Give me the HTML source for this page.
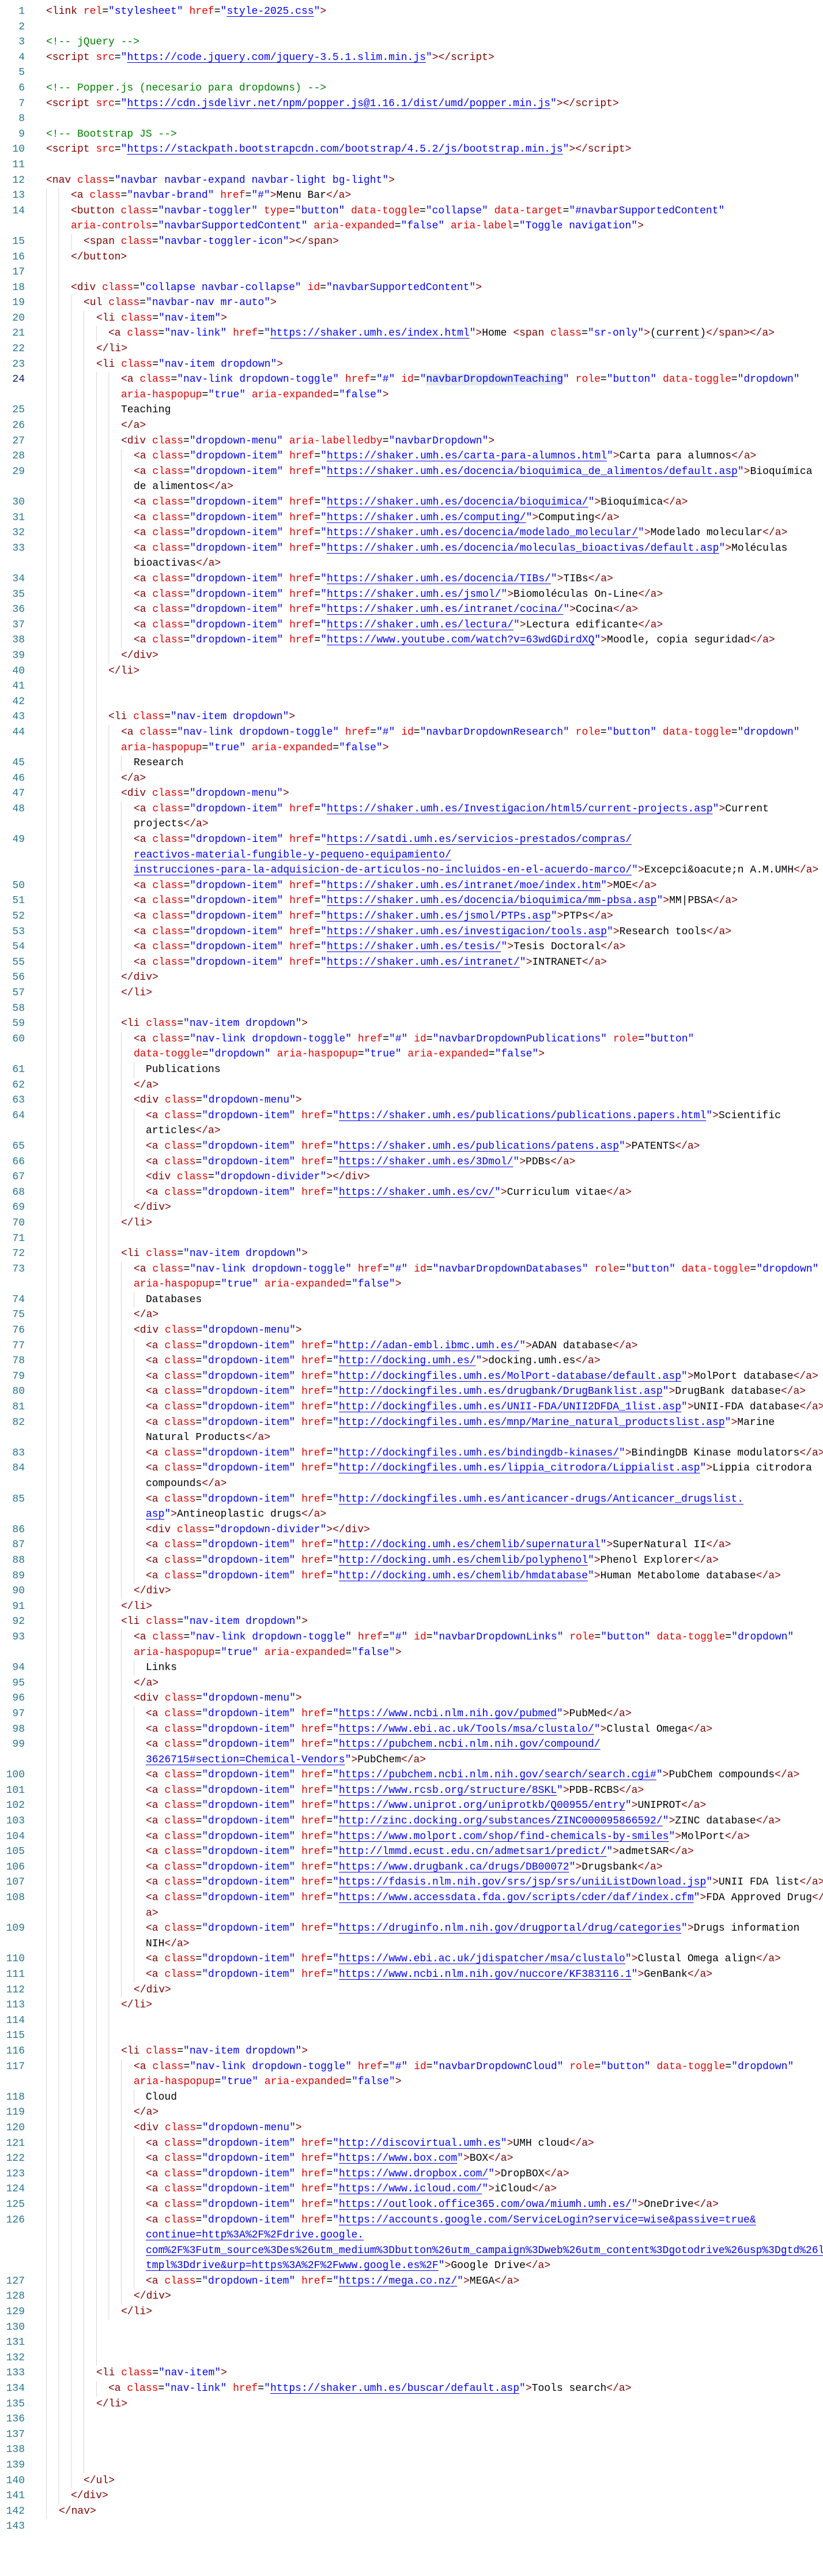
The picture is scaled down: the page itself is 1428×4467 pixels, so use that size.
<!DOCTYPE html>
<html><head><meta charset="utf-8">
<style>
html,body{margin:0;padding:0;background:#fff;}
body{width:1428px;height:4467px;overflow:hidden;padding-top:7px;box-sizing:border-box;font-family:"Liberation Mono","DejaVu Sans Mono",monospace;font-size:18px;color:#000;}
.r{position:relative;height:26.6px;line-height:26.6px;white-space:pre;overflow:hidden;
background-image:repeating-linear-gradient(to right,#d6d6d6 0 1px,transparent 1px 21.7px);
background-repeat:no-repeat;background-position:80px 0;background-size:calc(var(--g,0)*21.7px) 100%;}
.ln{position:absolute;left:0;width:43px;text-align:right;color:#237893;}
.ln.k{color:#0b216f;}
b{font-weight:normal;color:#800000}
s{text-decoration:none;color:#e50000}
q{quotes:none;color:#0000ff}
u{color:#0000ff;text-decoration:underline;text-underline-offset:4px;}
em{font-style:normal;color:#008000}
.hl{background:#e5ebf1}
.cu{text-decoration:underline;text-decoration-color:#aac0f0;text-underline-offset:4px}
</style></head><body>
<div class="r" style="padding-left:80px"><span class="ln">1</span><b>&lt;link</b> <s>rel</s>=<q>"stylesheet"</q> <s>href</s>=<q>"<u>style-2025.css</u>"</q><b>&gt;</b></div>
<div class="r"><span class="ln">2</span></div>
<div class="r" style="padding-left:80px"><span class="ln">3</span><em>&lt;!-- jQuery --&gt;</em></div>
<div class="r" style="padding-left:80px"><span class="ln">4</span><b>&lt;script</b> <s>src</s>=<q>"<u>https://code.jquery.com/jquery-3.5.1.slim.min.js</u>"</q><b>&gt;&lt;/script&gt;</b></div>
<div class="r"><span class="ln">5</span></div>
<div class="r" style="padding-left:80px"><span class="ln">6</span><em>&lt;!-- Popper.js (necesario para dropdowns) --&gt;</em></div>
<div class="r" style="padding-left:80px"><span class="ln">7</span><b>&lt;script</b> <s>src</s>=<q>"<u>https://cdn.jsdelivr.net/npm/popper.js@1.16.1/dist/umd/popper.min.js</u>"</q><b>&gt;&lt;/script&gt;</b></div>
<div class="r"><span class="ln">8</span></div>
<div class="r" style="padding-left:80px"><span class="ln">9</span><em>&lt;!-- Bootstrap JS --&gt;</em></div>
<div class="r" style="padding-left:80px"><span class="ln">10</span><b>&lt;script</b> <s>src</s>=<q>"<u>https://stackpath.bootstrapcdn.com/bootstrap/4.5.2/js/bootstrap.min.js</u>"</q><b>&gt;&lt;/script&gt;</b></div>
<div class="r"><span class="ln">11</span></div>
<div class="r" style="padding-left:80px"><span class="ln">12</span><b>&lt;nav</b> <s>class</s>=<q>"navbar navbar-expand navbar-light bg-light"</q><b>&gt;</b></div>
<div class="r" style="padding-left:123px;--g:2"><span class="ln">13</span><b>&lt;a</b> <s>class</s>=<q>"navbar-brand"</q> <s>href</s>=<q>"#"</q><b>&gt;</b>Menu Bar<b>&lt;/a&gt;</b></div>
<div class="r" style="padding-left:123px;--g:2"><span class="ln">14</span><b>&lt;button</b> <s>class</s>=<q>"navbar-toggler"</q> <s>type</s>=<q>"button"</q> <s>data-toggle</s>=<q>"collapse"</q> <s>data-target</s>=<q>"#navbarSupportedContent"</q></div>
<div class="r" style="padding-left:123px;--g:2"><s>aria-controls</s>=<q>"navbarSupportedContent"</q> <s>aria-expanded</s>=<q>"false"</q> <s>aria-label</s>=<q>"Toggle navigation"</q><b>&gt;</b></div>
<div class="r" style="padding-left:145px;--g:3"><span class="ln">15</span><b>&lt;span</b> <s>class</s>=<q>"navbar-toggler-icon"</q><b>&gt;&lt;/span&gt;</b></div>
<div class="r" style="padding-left:123px;--g:2"><span class="ln">16</span><b>&lt;/button&gt;</b></div>
<div class="r" style="--g:2"><span class="ln">17</span></div>
<div class="r" style="padding-left:123px;--g:2"><span class="ln">18</span><b>&lt;div</b> <s>class</s>=<q>"collapse navbar-collapse"</q> <s>id</s>=<q>"navbarSupportedContent"</q><b>&gt;</b></div>
<div class="r" style="padding-left:145px;--g:3"><span class="ln">19</span><b>&lt;ul</b> <s>class</s>=<q>"navbar-nav mr-auto"</q><b>&gt;</b></div>
<div class="r" style="padding-left:167px;--g:4"><span class="ln">20</span><b>&lt;li</b> <s>class</s>=<q>"nav-item"</q><b>&gt;</b></div>
<div class="r" style="padding-left:188px;--g:5"><span class="ln">21</span><b>&lt;a</b> <s>class</s>=<q>"nav-link"</q> <s>href</s>=<q>"<u>https://shaker.umh.es/index.html</u>"</q><b>&gt;</b>Home <b>&lt;span</b> <s>class</s>=<q>"sr-only"</q><b>&gt;</b><span class="cu">(current)</span><b>&lt;/span&gt;&lt;/a&gt;</b></div>
<div class="r" style="padding-left:167px;--g:4"><span class="ln">22</span><b>&lt;/li&gt;</b></div>
<div class="r" style="padding-left:167px;--g:4"><span class="ln">23</span><b>&lt;li</b> <s>class</s>=<q>"nav-item dropdown"</q><b>&gt;</b></div>
<div class="r" style="padding-left:210px;--g:6"><span class="ln k">24</span><b>&lt;a</b> <s>class</s>=<q>"nav-link dropdown-toggle"</q> <s>href</s>=<q>"#"</q> <s>id</s>=<q>"<span class="hl">navbarDropdownTeaching</span>"</q> <s>role</s>=<q>"button"</q> <s>data-toggle</s>=<q>"dropdown"</q></div>
<div class="r" style="padding-left:210px;--g:6"><s>aria-haspopup</s>=<q>"true"</q> <s>aria-expanded</s>=<q>"false"</q><b>&gt;</b></div>
<div class="r" style="padding-left:210px;--g:6"><span class="ln">25</span>Teaching</div>
<div class="r" style="padding-left:210px;--g:6"><span class="ln">26</span><b>&lt;/a&gt;</b></div>
<div class="r" style="padding-left:210px;--g:6"><span class="ln">27</span><b>&lt;div</b> <s>class</s>=<q>"dropdown-menu"</q> <s>aria-labelledby</s>=<q>"navbarDropdown"</q><b>&gt;</b></div>
<div class="r" style="padding-left:232px;--g:7"><span class="ln">28</span><b>&lt;a</b> <s>class</s>=<q>"dropdown-item"</q> <s>href</s>=<q>"<u>https://shaker.umh.es/carta-para-alumnos.html</u>"</q><b>&gt;</b>Carta para alumnos<b>&lt;/a&gt;</b></div>
<div class="r" style="padding-left:232px;--g:7"><span class="ln">29</span><b>&lt;a</b> <s>class</s>=<q>"dropdown-item"</q> <s>href</s>=<q>"<u>https://shaker.umh.es/docencia/bioquimica_de_alimentos/default.asp</u>"</q><b>&gt;</b>Bioquímica</div>
<div class="r" style="padding-left:232px;--g:7">de alimentos<b>&lt;/a&gt;</b></div>
<div class="r" style="padding-left:232px;--g:7"><span class="ln">30</span><b>&lt;a</b> <s>class</s>=<q>"dropdown-item"</q> <s>href</s>=<q>"<u>https://shaker.umh.es/docencia/bioquimica/</u>"</q><b>&gt;</b>Bioquímica<b>&lt;/a&gt;</b></div>
<div class="r" style="padding-left:232px;--g:7"><span class="ln">31</span><b>&lt;a</b> <s>class</s>=<q>"dropdown-item"</q> <s>href</s>=<q>"<u>https://shaker.umh.es/computing/</u>"</q><b>&gt;</b>Computing<b>&lt;/a&gt;</b></div>
<div class="r" style="padding-left:232px;--g:7"><span class="ln">32</span><b>&lt;a</b> <s>class</s>=<q>"dropdown-item"</q> <s>href</s>=<q>"<u>https://shaker.umh.es/docencia/modelado_molecular/</u>"</q><b>&gt;</b>Modelado molecular<b>&lt;/a&gt;</b></div>
<div class="r" style="padding-left:232px;--g:7"><span class="ln">33</span><b>&lt;a</b> <s>class</s>=<q>"dropdown-item"</q> <s>href</s>=<q>"<u>https://shaker.umh.es/docencia/moleculas_bioactivas/default.asp</u>"</q><b>&gt;</b>Moléculas</div>
<div class="r" style="padding-left:232px;--g:7">bioactivas<b>&lt;/a&gt;</b></div>
<div class="r" style="padding-left:232px;--g:7"><span class="ln">34</span><b>&lt;a</b> <s>class</s>=<q>"dropdown-item"</q> <s>href</s>=<q>"<u>https://shaker.umh.es/docencia/TIBs/</u>"</q><b>&gt;</b>TIBs<b>&lt;/a&gt;</b></div>
<div class="r" style="padding-left:232px;--g:7"><span class="ln">35</span><b>&lt;a</b> <s>class</s>=<q>"dropdown-item"</q> <s>href</s>=<q>"<u>https://shaker.umh.es/jsmol/</u>"</q><b>&gt;</b>Biomoléculas On-Line<b>&lt;/a&gt;</b></div>
<div class="r" style="padding-left:232px;--g:7"><span class="ln">36</span><b>&lt;a</b> <s>class</s>=<q>"dropdown-item"</q> <s>href</s>=<q>"<u>https://shaker.umh.es/intranet/cocina/</u>"</q><b>&gt;</b>Cocina<b>&lt;/a&gt;</b></div>
<div class="r" style="padding-left:232px;--g:7"><span class="ln">37</span><b>&lt;a</b> <s>class</s>=<q>"dropdown-item"</q> <s>href</s>=<q>"<u>https://shaker.umh.es/lectura/</u>"</q><b>&gt;</b>Lectura edificante<b>&lt;/a&gt;</b></div>
<div class="r" style="padding-left:232px;--g:7"><span class="ln">38</span><b>&lt;a</b> <s>class</s>=<q>"dropdown-item"</q> <s>href</s>=<q>"<u>https://www.youtube.com/watch?v=63wdGDirdXQ</u>"</q><b>&gt;</b>Moodle, copia seguridad<b>&lt;/a&gt;</b></div>
<div class="r" style="padding-left:210px;--g:6"><span class="ln">39</span><b>&lt;/div&gt;</b></div>
<div class="r" style="padding-left:188px;--g:5"><span class="ln">40</span><b>&lt;/li&gt;</b></div>
<div class="r" style="--g:5"><span class="ln">41</span></div>
<div class="r" style="--g:5"><span class="ln">42</span></div>
<div class="r" style="padding-left:188px;--g:5"><span class="ln">43</span><b>&lt;li</b> <s>class</s>=<q>"nav-item dropdown"</q><b>&gt;</b></div>
<div class="r" style="padding-left:210px;--g:6"><span class="ln">44</span><b>&lt;a</b> <s>class</s>=<q>"nav-link dropdown-toggle"</q> <s>href</s>=<q>"#"</q> <s>id</s>=<q>"navbarDropdownResearch"</q> <s>role</s>=<q>"button"</q> <s>data-toggle</s>=<q>"dropdown"</q></div>
<div class="r" style="padding-left:210px;--g:6"><s>aria-haspopup</s>=<q>"true"</q> <s>aria-expanded</s>=<q>"false"</q><b>&gt;</b></div>
<div class="r" style="padding-left:232px;--g:7"><span class="ln">45</span>Research</div>
<div class="r" style="padding-left:210px;--g:6"><span class="ln">46</span><b>&lt;/a&gt;</b></div>
<div class="r" style="padding-left:210px;--g:6"><span class="ln">47</span><b>&lt;div</b> <s>class</s>=<q>"dropdown-menu"</q><b>&gt;</b></div>
<div class="r" style="padding-left:232px;--g:7"><span class="ln">48</span><b>&lt;a</b> <s>class</s>=<q>"dropdown-item"</q> <s>href</s>=<q>"<u>https://shaker.umh.es/Investigacion/html5/current-projects.asp</u>"</q><b>&gt;</b>Current</div>
<div class="r" style="padding-left:232px;--g:7">projects<b>&lt;/a&gt;</b></div>
<div class="r" style="padding-left:232px;--g:7"><span class="ln">49</span><b>&lt;a</b> <s>class</s>=<q>"dropdown-item"</q> <s>href</s>=<q>"<u>https://satdi.umh.es/servicios-prestados/compras/</u></q></div>
<div class="r" style="padding-left:232px;--g:7"><q><u>reactivos-material-fungible-y-pequeno-equipamiento/</u></q></div>
<div class="r" style="padding-left:232px;--g:7"><q><u>instrucciones-para-la-adquisicion-de-articulos-no-incluidos-en-el-acuerdo-marco/</u>"</q><b>&gt;</b>Excepci&amp;oacute;n A.M.UMH<b>&lt;/a&gt;</b></div>
<div class="r" style="padding-left:232px;--g:7"><span class="ln">50</span><b>&lt;a</b> <s>class</s>=<q>"dropdown-item"</q> <s>href</s>=<q>"<u>https://shaker.umh.es/intranet/moe/index.htm</u>"</q><b>&gt;</b>MOE<b>&lt;/a&gt;</b></div>
<div class="r" style="padding-left:232px;--g:7"><span class="ln">51</span><b>&lt;a</b> <s>class</s>=<q>"dropdown-item"</q> <s>href</s>=<q>"<u>https://shaker.umh.es/docencia/bioquimica/mm-pbsa.asp</u>"</q><b>&gt;</b>MM|PBSA<b>&lt;/a&gt;</b></div>
<div class="r" style="padding-left:232px;--g:7"><span class="ln">52</span><b>&lt;a</b> <s>class</s>=<q>"dropdown-item"</q> <s>href</s>=<q>"<u>https://shaker.umh.es/jsmol/PTPs.asp</u>"</q><b>&gt;</b>PTPs<b>&lt;/a&gt;</b></div>
<div class="r" style="padding-left:232px;--g:7"><span class="ln">53</span><b>&lt;a</b> <s>class</s>=<q>"dropdown-item"</q> <s>href</s>=<q>"<u>https://shaker.umh.es/investigacion/tools.asp</u>"</q><b>&gt;</b>Research tools<b>&lt;/a&gt;</b></div>
<div class="r" style="padding-left:232px;--g:7"><span class="ln">54</span><b>&lt;a</b> <s>class</s>=<q>"dropdown-item"</q> <s>href</s>=<q>"<u>https://shaker.umh.es/tesis/</u>"</q><b>&gt;</b>Tesis Doctoral<b>&lt;/a&gt;</b></div>
<div class="r" style="padding-left:232px;--g:7"><span class="ln">55</span><b>&lt;a</b> <s>class</s>=<q>"dropdown-item"</q> <s>href</s>=<q>"<u>https://shaker.umh.es/intranet/</u>"</q><b>&gt;</b>INTRANET<b>&lt;/a&gt;</b></div>
<div class="r" style="padding-left:210px;--g:6"><span class="ln">56</span><b>&lt;/div&gt;</b></div>
<div class="r" style="padding-left:210px;--g:6"><span class="ln">57</span><b>&lt;/li&gt;</b></div>
<div class="r" style="--g:6"><span class="ln">58</span></div>
<div class="r" style="padding-left:210px;--g:6"><span class="ln">59</span><b>&lt;li</b> <s>class</s>=<q>"nav-item dropdown"</q><b>&gt;</b></div>
<div class="r" style="padding-left:232px;--g:7"><span class="ln">60</span><b>&lt;a</b> <s>class</s>=<q>"nav-link dropdown-toggle"</q> <s>href</s>=<q>"#"</q> <s>id</s>=<q>"navbarDropdownPublications"</q> <s>role</s>=<q>"button"</q></div>
<div class="r" style="padding-left:232px;--g:7"><s>data-toggle</s>=<q>"dropdown"</q> <s>aria-haspopup</s>=<q>"true"</q> <s>aria-expanded</s>=<q>"false"</q><b>&gt;</b></div>
<div class="r" style="padding-left:253px;--g:8"><span class="ln">61</span>Publications</div>
<div class="r" style="padding-left:232px;--g:7"><span class="ln">62</span><b>&lt;/a&gt;</b></div>
<div class="r" style="padding-left:232px;--g:7"><span class="ln">63</span><b>&lt;div</b> <s>class</s>=<q>"dropdown-menu"</q><b>&gt;</b></div>
<div class="r" style="padding-left:253px;--g:8"><span class="ln">64</span><b>&lt;a</b> <s>class</s>=<q>"dropdown-item"</q> <s>href</s>=<q>"<u>https://shaker.umh.es/publications/publications.papers.html</u>"</q><b>&gt;</b>Scientific</div>
<div class="r" style="padding-left:253px;--g:8">articles<b>&lt;/a&gt;</b></div>
<div class="r" style="padding-left:253px;--g:8"><span class="ln">65</span><b>&lt;a</b> <s>class</s>=<q>"dropdown-item"</q> <s>href</s>=<q>"<u>https://shaker.umh.es/publications/patens.asp</u>"</q><b>&gt;</b>PATENTS<b>&lt;/a&gt;</b></div>
<div class="r" style="padding-left:253px;--g:8"><span class="ln">66</span><b>&lt;a</b> <s>class</s>=<q>"dropdown-item"</q> <s>href</s>=<q>"<u>https://shaker.umh.es/3Dmol/</u>"</q><b>&gt;</b>PDBs<b>&lt;/a&gt;</b></div>
<div class="r" style="padding-left:253px;--g:8"><span class="ln">67</span><b>&lt;div</b> <s>class</s>=<q>"dropdown-divider"</q><b>&gt;&lt;/div&gt;</b></div>
<div class="r" style="padding-left:253px;--g:8"><span class="ln">68</span><b>&lt;a</b> <s>class</s>=<q>"dropdown-item"</q> <s>href</s>=<q>"<u>https://shaker.umh.es/cv/</u>"</q><b>&gt;</b>Curriculum vitae<b>&lt;/a&gt;</b></div>
<div class="r" style="padding-left:232px;--g:7"><span class="ln">69</span><b>&lt;/div&gt;</b></div>
<div class="r" style="padding-left:210px;--g:6"><span class="ln">70</span><b>&lt;/li&gt;</b></div>
<div class="r" style="--g:6"><span class="ln">71</span></div>
<div class="r" style="padding-left:210px;--g:6"><span class="ln">72</span><b>&lt;li</b> <s>class</s>=<q>"nav-item dropdown"</q><b>&gt;</b></div>
<div class="r" style="padding-left:232px;--g:7"><span class="ln">73</span><b>&lt;a</b> <s>class</s>=<q>"nav-link dropdown-toggle"</q> <s>href</s>=<q>"#"</q> <s>id</s>=<q>"navbarDropdownDatabases"</q> <s>role</s>=<q>"button"</q> <s>data-toggle</s>=<q>"dropdown"</q></div>
<div class="r" style="padding-left:232px;--g:7"><s>aria-haspopup</s>=<q>"true"</q> <s>aria-expanded</s>=<q>"false"</q><b>&gt;</b></div>
<div class="r" style="padding-left:253px;--g:8"><span class="ln">74</span>Databases</div>
<div class="r" style="padding-left:232px;--g:7"><span class="ln">75</span><b>&lt;/a&gt;</b></div>
<div class="r" style="padding-left:232px;--g:7"><span class="ln">76</span><b>&lt;div</b> <s>class</s>=<q>"dropdown-menu"</q><b>&gt;</b></div>
<div class="r" style="padding-left:253px;--g:8"><span class="ln">77</span><b>&lt;a</b> <s>class</s>=<q>"dropdown-item"</q> <s>href</s>=<q>"<u>http://adan-embl.ibmc.umh.es/</u>"</q><b>&gt;</b>ADAN database<b>&lt;/a&gt;</b></div>
<div class="r" style="padding-left:253px;--g:8"><span class="ln">78</span><b>&lt;a</b> <s>class</s>=<q>"dropdown-item"</q> <s>href</s>=<q>"<u>http://docking.umh.es/</u>"</q><b>&gt;</b>docking.umh.es<b>&lt;/a&gt;</b></div>
<div class="r" style="padding-left:253px;--g:8"><span class="ln">79</span><b>&lt;a</b> <s>class</s>=<q>"dropdown-item"</q> <s>href</s>=<q>"<u>http://dockingfiles.umh.es/MolPort-database/default.asp</u>"</q><b>&gt;</b>MolPort database<b>&lt;/a&gt;</b></div>
<div class="r" style="padding-left:253px;--g:8"><span class="ln">80</span><b>&lt;a</b> <s>class</s>=<q>"dropdown-item"</q> <s>href</s>=<q>"<u>http://dockingfiles.umh.es/drugbank/DrugBanklist.asp</u>"</q><b>&gt;</b>DrugBank database<b>&lt;/a&gt;</b></div>
<div class="r" style="padding-left:253px;--g:8"><span class="ln">81</span><b>&lt;a</b> <s>class</s>=<q>"dropdown-item"</q> <s>href</s>=<q>"<u>http://dockingfiles.umh.es/UNII-FDA/UNII2DFDA_1list.asp</u>"</q><b>&gt;</b>UNII-FDA database<b>&lt;/a&gt;</b></div>
<div class="r" style="padding-left:253px;--g:8"><span class="ln">82</span><b>&lt;a</b> <s>class</s>=<q>"dropdown-item"</q> <s>href</s>=<q>"<u>http://dockingfiles.umh.es/mnp/Marine_natural_productslist.asp</u>"</q><b>&gt;</b>Marine</div>
<div class="r" style="padding-left:253px;--g:8">Natural Products<b>&lt;/a&gt;</b></div>
<div class="r" style="padding-left:253px;--g:8"><span class="ln">83</span><b>&lt;a</b> <s>class</s>=<q>"dropdown-item"</q> <s>href</s>=<q>"<u>http://dockingfiles.umh.es/bindingdb-kinases/</u>"</q><b>&gt;</b>BindingDB Kinase modulators<b>&lt;/a&gt;</b></div>
<div class="r" style="padding-left:253px;--g:8"><span class="ln">84</span><b>&lt;a</b> <s>class</s>=<q>"dropdown-item"</q> <s>href</s>=<q>"<u>http://dockingfiles.umh.es/lippia_citrodora/Lippialist.asp</u>"</q><b>&gt;</b>Lippia citrodora</div>
<div class="r" style="padding-left:253px;--g:8">compounds<b>&lt;/a&gt;</b></div>
<div class="r" style="padding-left:253px;--g:8"><span class="ln">85</span><b>&lt;a</b> <s>class</s>=<q>"dropdown-item"</q> <s>href</s>=<q>"<u>http://dockingfiles.umh.es/anticancer-drugs/Anticancer_drugslist.</u></q></div>
<div class="r" style="padding-left:253px;--g:8"><q><u>asp</u>"</q><b>&gt;</b>Antineoplastic drugs<b>&lt;/a&gt;</b></div>
<div class="r" style="padding-left:253px;--g:8"><span class="ln">86</span><b>&lt;div</b> <s>class</s>=<q>"dropdown-divider"</q><b>&gt;&lt;/div&gt;</b></div>
<div class="r" style="padding-left:253px;--g:8"><span class="ln">87</span><b>&lt;a</b> <s>class</s>=<q>"dropdown-item"</q> <s>href</s>=<q>"<u>http://docking.umh.es/chemlib/supernatural</u>"</q><b>&gt;</b>SuperNatural II<b>&lt;/a&gt;</b></div>
<div class="r" style="padding-left:253px;--g:8"><span class="ln">88</span><b>&lt;a</b> <s>class</s>=<q>"dropdown-item"</q> <s>href</s>=<q>"<u>http://docking.umh.es/chemlib/polyphenol</u>"</q><b>&gt;</b>Phenol Explorer<b>&lt;/a&gt;</b></div>
<div class="r" style="padding-left:253px;--g:8"><span class="ln">89</span><b>&lt;a</b> <s>class</s>=<q>"dropdown-item"</q> <s>href</s>=<q>"<u>http://docking.umh.es/chemlib/hmdatabase</u>"</q><b>&gt;</b>Human Metabolome database<b>&lt;/a&gt;</b></div>
<div class="r" style="padding-left:232px;--g:7"><span class="ln">90</span><b>&lt;/div&gt;</b></div>
<div class="r" style="padding-left:210px;--g:6"><span class="ln">91</span><b>&lt;/li&gt;</b></div>
<div class="r" style="padding-left:210px;--g:6"><span class="ln">92</span><b>&lt;li</b> <s>class</s>=<q>"nav-item dropdown"</q><b>&gt;</b></div>
<div class="r" style="padding-left:232px;--g:7"><span class="ln">93</span><b>&lt;a</b> <s>class</s>=<q>"nav-link dropdown-toggle"</q> <s>href</s>=<q>"#"</q> <s>id</s>=<q>"navbarDropdownLinks"</q> <s>role</s>=<q>"button"</q> <s>data-toggle</s>=<q>"dropdown"</q></div>
<div class="r" style="padding-left:232px;--g:7"><s>aria-haspopup</s>=<q>"true"</q> <s>aria-expanded</s>=<q>"false"</q><b>&gt;</b></div>
<div class="r" style="padding-left:253px;--g:8"><span class="ln">94</span>Links</div>
<div class="r" style="padding-left:232px;--g:7"><span class="ln">95</span><b>&lt;/a&gt;</b></div>
<div class="r" style="padding-left:232px;--g:7"><span class="ln">96</span><b>&lt;div</b> <s>class</s>=<q>"dropdown-menu"</q><b>&gt;</b></div>
<div class="r" style="padding-left:253px;--g:8"><span class="ln">97</span><b>&lt;a</b> <s>class</s>=<q>"dropdown-item"</q> <s>href</s>=<q>"<u>https://www.ncbi.nlm.nih.gov/pubmed</u>"</q><b>&gt;</b>PubMed<b>&lt;/a&gt;</b></div>
<div class="r" style="padding-left:253px;--g:8"><span class="ln">98</span><b>&lt;a</b> <s>class</s>=<q>"dropdown-item"</q> <s>href</s>=<q>"<u>https://www.ebi.ac.uk/Tools/msa/clustalo/</u>"</q><b>&gt;</b>Clustal Omega<b>&lt;/a&gt;</b></div>
<div class="r" style="padding-left:253px;--g:8"><span class="ln">99</span><b>&lt;a</b> <s>class</s>=<q>"dropdown-item"</q> <s>href</s>=<q>"<u>https://pubchem.ncbi.nlm.nih.gov/compound/</u></q></div>
<div class="r" style="padding-left:253px;--g:8"><q><u>3626715#section=Chemical-Vendors</u>"</q><b>&gt;</b>PubChem<b>&lt;/a&gt;</b></div>
<div class="r" style="padding-left:253px;--g:8"><span class="ln">100</span><b>&lt;a</b> <s>class</s>=<q>"dropdown-item"</q> <s>href</s>=<q>"<u>https://pubchem.ncbi.nlm.nih.gov/search/search.cgi#</u>"</q><b>&gt;</b>PubChem compounds<b>&lt;/a&gt;</b></div>
<div class="r" style="padding-left:253px;--g:8"><span class="ln">101</span><b>&lt;a</b> <s>class</s>=<q>"dropdown-item"</q> <s>href</s>=<q>"<u>https://www.rcsb.org/structure/8SKL</u>"</q><b>&gt;</b>PDB-RCBS<b>&lt;/a&gt;</b></div>
<div class="r" style="padding-left:253px;--g:8"><span class="ln">102</span><b>&lt;a</b> <s>class</s>=<q>"dropdown-item"</q> <s>href</s>=<q>"<u>https://www.uniprot.org/uniprotkb/Q00955/entry</u>"</q><b>&gt;</b>UNIPROT<b>&lt;/a&gt;</b></div>
<div class="r" style="padding-left:253px;--g:8"><span class="ln">103</span><b>&lt;a</b> <s>class</s>=<q>"dropdown-item"</q> <s>href</s>=<q>"<u>http://zinc.docking.org/substances/ZINC000095866592/</u>"</q><b>&gt;</b>ZINC database<b>&lt;/a&gt;</b></div>
<div class="r" style="padding-left:253px;--g:8"><span class="ln">104</span><b>&lt;a</b> <s>class</s>=<q>"dropdown-item"</q> <s>href</s>=<q>"<u>https://www.molport.com/shop/find-chemicals-by-smiles</u>"</q><b>&gt;</b>MolPort<b>&lt;/a&gt;</b></div>
<div class="r" style="padding-left:253px;--g:8"><span class="ln">105</span><b>&lt;a</b> <s>class</s>=<q>"dropdown-item"</q> <s>href</s>=<q>"<u>http://lmmd.ecust.edu.cn/admetsar1/predict/</u>"</q><b>&gt;</b>admetSAR<b>&lt;/a&gt;</b></div>
<div class="r" style="padding-left:253px;--g:8"><span class="ln">106</span><b>&lt;a</b> <s>class</s>=<q>"dropdown-item"</q> <s>href</s>=<q>"<u>https://www.drugbank.ca/drugs/DB00072</u>"</q><b>&gt;</b>Drugsbank<b>&lt;/a&gt;</b></div>
<div class="r" style="padding-left:253px;--g:8"><span class="ln">107</span><b>&lt;a</b> <s>class</s>=<q>"dropdown-item"</q> <s>href</s>=<q>"<u>https://fdasis.nlm.nih.gov/srs/jsp/srs/uniiListDownload.jsp</u>"</q><b>&gt;</b>UNII FDA list<b>&lt;/a&gt;</b></div>
<div class="r" style="padding-left:253px;--g:8"><span class="ln">108</span><b>&lt;a</b> <s>class</s>=<q>"dropdown-item"</q> <s>href</s>=<q>"<u>https://www.accessdata.fda.gov/scripts/cder/daf/index.cfm</u>"</q><b>&gt;</b>FDA Approved Drug<b>&lt;/</b></div>
<div class="r" style="padding-left:253px;--g:8"><b>a&gt;</b></div>
<div class="r" style="padding-left:253px;--g:8"><span class="ln">109</span><b>&lt;a</b> <s>class</s>=<q>"dropdown-item"</q> <s>href</s>=<q>"<u>https://druginfo.nlm.nih.gov/drugportal/drug/categories</u>"</q><b>&gt;</b>Drugs information</div>
<div class="r" style="padding-left:253px;--g:8">NIH<b>&lt;/a&gt;</b></div>
<div class="r" style="padding-left:253px;--g:8"><span class="ln">110</span><b>&lt;a</b> <s>class</s>=<q>"dropdown-item"</q> <s>href</s>=<q>"<u>https://www.ebi.ac.uk/jdispatcher/msa/clustalo</u>"</q><b>&gt;</b>Clustal Omega align<b>&lt;/a&gt;</b></div>
<div class="r" style="padding-left:253px;--g:8"><span class="ln">111</span><b>&lt;a</b> <s>class</s>=<q>"dropdown-item"</q> <s>href</s>=<q>"<u>https://www.ncbi.nlm.nih.gov/nuccore/KF383116.1</u>"</q><b>&gt;</b>GenBank<b>&lt;/a&gt;</b></div>
<div class="r" style="padding-left:232px;--g:7"><span class="ln">112</span><b>&lt;/div&gt;</b></div>
<div class="r" style="padding-left:210px;--g:6"><span class="ln">113</span><b>&lt;/li&gt;</b></div>
<div class="r" style="--g:6"><span class="ln">114</span></div>
<div class="r" style="--g:6"><span class="ln">115</span></div>
<div class="r" style="padding-left:210px;--g:6"><span class="ln">116</span><b>&lt;li</b> <s>class</s>=<q>"nav-item dropdown"</q><b>&gt;</b></div>
<div class="r" style="padding-left:232px;--g:7"><span class="ln">117</span><b>&lt;a</b> <s>class</s>=<q>"nav-link dropdown-toggle"</q> <s>href</s>=<q>"#"</q> <s>id</s>=<q>"navbarDropdownCloud"</q> <s>role</s>=<q>"button"</q> <s>data-toggle</s>=<q>"dropdown"</q></div>
<div class="r" style="padding-left:232px;--g:7"><s>aria-haspopup</s>=<q>"true"</q> <s>aria-expanded</s>=<q>"false"</q><b>&gt;</b></div>
<div class="r" style="padding-left:253px;--g:8"><span class="ln">118</span>Cloud</div>
<div class="r" style="padding-left:232px;--g:7"><span class="ln">119</span><b>&lt;/a&gt;</b></div>
<div class="r" style="padding-left:232px;--g:7"><span class="ln">120</span><b>&lt;div</b> <s>class</s>=<q>"dropdown-menu"</q><b>&gt;</b></div>
<div class="r" style="padding-left:253px;--g:8"><span class="ln">121</span><b>&lt;a</b> <s>class</s>=<q>"dropdown-item"</q> <s>href</s>=<q>"<u>http://discovirtual.umh.es</u>"</q><b>&gt;</b>UMH cloud<b>&lt;/a&gt;</b></div>
<div class="r" style="padding-left:253px;--g:8"><span class="ln">122</span><b>&lt;a</b> <s>class</s>=<q>"dropdown-item"</q> <s>href</s>=<q>"<u>https://www.box.com</u>"</q><b>&gt;</b>BOX<b>&lt;/a&gt;</b></div>
<div class="r" style="padding-left:253px;--g:8"><span class="ln">123</span><b>&lt;a</b> <s>class</s>=<q>"dropdown-item"</q> <s>href</s>=<q>"<u>https://www.dropbox.com/</u>"</q><b>&gt;</b>DropBOX<b>&lt;/a&gt;</b></div>
<div class="r" style="padding-left:253px;--g:8"><span class="ln">124</span><b>&lt;a</b> <s>class</s>=<q>"dropdown-item"</q> <s>href</s>=<q>"<u>https://www.icloud.com/</u>"</q><b>&gt;</b>iCloud<b>&lt;/a&gt;</b></div>
<div class="r" style="padding-left:253px;--g:8"><span class="ln">125</span><b>&lt;a</b> <s>class</s>=<q>"dropdown-item"</q> <s>href</s>=<q>"<u>https://outlook.office365.com/owa/miumh.umh.es/</u>"</q><b>&gt;</b>OneDrive<b>&lt;/a&gt;</b></div>
<div class="r" style="padding-left:253px;--g:8"><span class="ln">126</span><b>&lt;a</b> <s>class</s>=<q>"dropdown-item"</q> <s>href</s>=<q>"<u>https://accounts.google.com/ServiceLogin?service=wise&amp;passive=true&amp;</u></q></div>
<div class="r" style="padding-left:253px;--g:8"><q><u>continue=http%3A%2F%2Fdrive.google.</u></q></div>
<div class="r" style="padding-left:253px;--g:8"><q><u>com%2F%3Futm_source%3Des%26utm_medium%3Dbutton%26utm_campaign%3Dweb%26utm_content%3Dgotodrive%26usp%3Dgtd%26l</u></q></div>
<div class="r" style="padding-left:253px;--g:8"><q><u>tmpl%3Ddrive&amp;urp=https%3A%2F%2Fwww.google.es%2F</u>"</q><b>&gt;</b>Google Drive<b>&lt;/a&gt;</b></div>
<div class="r" style="padding-left:253px;--g:8"><span class="ln">127</span><b>&lt;a</b> <s>class</s>=<q>"dropdown-item"</q> <s>href</s>=<q>"<u>https://mega.co.nz/</u>"</q><b>&gt;</b>MEGA<b>&lt;/a&gt;</b></div>
<div class="r" style="padding-left:232px;--g:7"><span class="ln">128</span><b>&lt;/div&gt;</b></div>
<div class="r" style="padding-left:210px;--g:6"><span class="ln">129</span><b>&lt;/li&gt;</b></div>
<div class="r" style="--g:5"><span class="ln">130</span></div>
<div class="r" style="--g:5"><span class="ln">131</span></div>
<div class="r" style="--g:5"><span class="ln">132</span></div>
<div class="r" style="padding-left:167px;--g:4"><span class="ln">133</span><b>&lt;li</b> <s>class</s>=<q>"nav-item"</q><b>&gt;</b></div>
<div class="r" style="padding-left:188px;--g:5"><span class="ln">134</span><b>&lt;a</b> <s>class</s>=<q>"nav-link"</q> <s>href</s>=<q>"<u>https://shaker.umh.es/buscar/default.asp</u>"</q><b>&gt;</b>Tools search<b>&lt;/a&gt;</b></div>
<div class="r" style="padding-left:167px;--g:4"><span class="ln">135</span><b>&lt;/li&gt;</b></div>
<div class="r" style="--g:4"><span class="ln">136</span></div>
<div class="r" style="--g:4"><span class="ln">137</span></div>
<div class="r" style="--g:4"><span class="ln">138</span></div>
<div class="r" style="--g:4"><span class="ln">139</span></div>
<div class="r" style="padding-left:145px;--g:3"><span class="ln">140</span><b>&lt;/ul&gt;</b></div>
<div class="r" style="padding-left:123px;--g:2"><span class="ln">141</span><b>&lt;/div&gt;</b></div>
<div class="r" style="padding-left:102px;--g:1"><span class="ln">142</span><b>&lt;/nav&gt;</b></div>
<div class="r"><span class="ln">143</span></div>
</body></html>
